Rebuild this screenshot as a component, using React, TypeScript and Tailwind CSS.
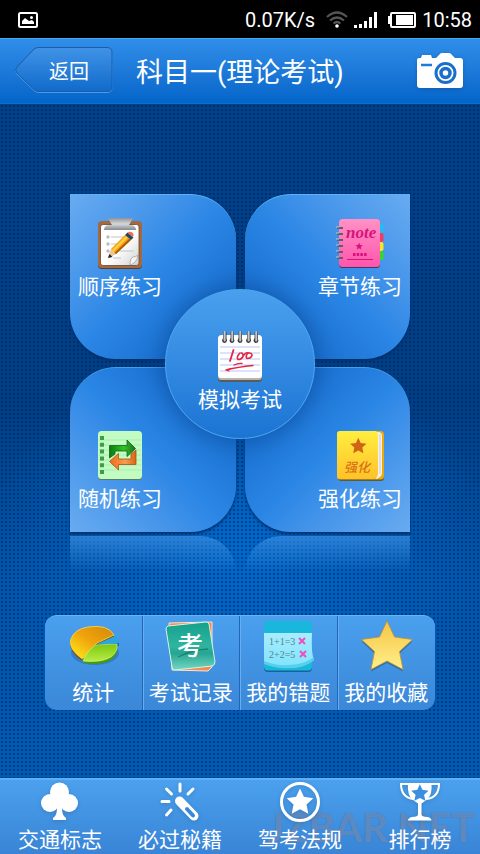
import type { ReactNode } from "react";

const STAR = "M26 1 L33.5 17 L51.5 19.5 L38.5 31.5 L42 49.5 L26 41 L10 49.5 L13.5 31.5 L0.5 19.5 L18.5 17 Z";

function ClipboardIcon() {
  return (
    <svg width="46" height="52" viewBox="0 0 46 52" className="overflow-visible" aria-hidden="true">
      <defs>
        <linearGradient id="clip" x1="0" y1="0" x2="0" y2="1">
          <stop offset="0" stopColor="#8f9396" />
          <stop offset=".5" stopColor="#d6d9db" />
          <stop offset="1" stopColor="#85898c" />
        </linearGradient>
        <linearGradient id="paper" x1="0" y1="0" x2="1" y2="1">
          <stop offset=".55" stopColor="#fff" />
          <stop offset="1" stopColor="#cfcfcf" />
        </linearGradient>
      </defs>
      <rect x="1" y="4" width="44" height="47" rx="4" fill="#5c3d28" />
      <rect x="1" y="3" width="44" height="47" rx="4" fill="#a5693f" />
      <rect x="3.500" y="6.500" width="38.500" height="41" rx="2.500" fill="url(#paper)" stroke="#6b452b" strokeWidth=".8" />
      <path d="M11 0h25l-4 7h3q4 1 4 5H7q0-4 4-5h4z" fill="url(#clip)" />
      <path d="M14 19h15M14 26h9M15 33h22M16 40h8" stroke="#c3c3c3" strokeWidth="1" />
      <circle cx="11" cy="19" r="1.700" fill="#bbb" />
      <circle cx="11" cy="26" r="1.700" fill="#bbb" />
      <circle cx="11" cy="33" r="1.700" fill="#bbb" />
      <path d="M11 39l3-8 5 5-7 4z" fill="#edc798" />
      <path d="M11 40l1.500-4 3 3z" fill="#222" />
      <path d="M14 31L28 17l6 5-15 14z" fill="#f5a013" />
      <path d="M15 32L29 18l2 1.500L16.500 34z" fill="#ffd03e" />
      <path d="M19 36l15-14-1.500-1.500L17.500 35z" fill="#a85b0d" />
      <path d="M28 17l2.500-2.500 6 5L34 22z" fill="#25475b" />
      <path d="M30.500 14.500q4-2 6 1.500.500 2-1 3z" fill="#f06f54" />
      <path d="M41 37q-1 8-8 10 0-7 3-8 3 0 5-2z" fill="#f4f4f4" stroke="#999" strokeWidth=".7" />
    </svg>
  );
}

function NoteIcon() {
  return (
    <svg width="46" height="52" viewBox="0 0 46 52" className="overflow-visible" aria-hidden="true">
      <defs>
        <linearGradient id="pink" x1="0" y1="0" x2="0" y2="1">
          <stop offset="0" stopColor="#ff92c6" />
          <stop offset="1" stopColor="#ff55ac" />
        </linearGradient>
      </defs>
      <rect x="39" y="6" width="7.500" height="9" rx="2" fill="#25bdf0" />
      <rect x="39" y="15" width="7.500" height="9" rx="2" fill="#f23a68" />
      <rect x="39" y="24" width="7.500" height="9" rx="2" fill="#fbe32a" />
      <rect x="39" y="33" width="7.500" height="9" rx="2" fill="#35d924" />
      <rect x="2" y="2" width="41" height="48" rx="3.500" fill="#3c3a6d" />
      <rect x="2" y="1" width="41" height="48" rx="3.500" fill="url(#pink)" />
      <path d="M0 10h6M0 16h6M0 22h6M0 28h6M0 34h6M0 40h6" stroke="#56626c" strokeWidth="2" />
      <path d="M-1 9h3M-1 15h3M-1 21h3M-1 27h3M-1 33h3M-1 39h3" stroke="#b9c4cc" strokeWidth="1" />
      <text x="9" y="20" fontFamily="Liberation Serif, serif" fontStyle="italic" fontWeight="700" fontSize="17" fill="#d8127a">note</text>
      <path d={STAR} transform="translate(18.500 24.500) scale(.14)" fill="#d8127a" />
      <path d="M16 36.500h14" stroke="#d8127a" strokeWidth="3" strokeDasharray="2.500 1.200" />
      <path d="M10 41.500h26" stroke="#d8127a" strokeWidth="1" />
    </svg>
  );
}

function ExamIcon() {
  return (
    <svg width="46" height="52" viewBox="0 0 46 52" aria-hidden="true">
      <defs>
        <linearGradient id="ring" x1="0" y1="0" x2="1" y2="0">
          <stop offset="0" stopColor="#555" />
          <stop offset=".5" stopColor="#ddd" />
          <stop offset="1" stopColor="#333" />
        </linearGradient>
      </defs>
      <rect x="1" y="8" width="44" height="43" rx="3.500" fill="#5e5a58" />
      <rect x="1" y="6" width="44" height="43" rx="3.500" fill="#b9b4b0" />
      <rect x="1" y="4" width="44" height="43" rx="3.500" fill="#fff" />
      <path d="M3 16h40M3 22h40M3 28h40M3 34h40M3 40h40" stroke="#cfd9fa" strokeWidth="1.500" />
      {[6, 13.5, 21.5, 30, 37.5].map((x) => (
        <g key={x}>
          <circle cx={x + 1.5} cy="9.500" r="2.400" fill="#383838" />
          <rect x={x} y="0" width="3.500" height="10.500" rx="1.700" fill="url(#ring)" />
        </g>
      ))}
      <g fill="none" stroke="#e8213f" strokeLinecap="round">
        <path d="M16.500 19L13 30" strokeWidth="1.800" />
        <path d="M23 22q-4 4-2 6.500 3 .5 5-3 .500-3-1.500-3.500M27 24q2-3 4-2" strokeWidth="1.600" />
        <path d="M31 22q-3 3-1 5.500 4 0 5-3 0-3-4-2.500" strokeWidth="1.600" />
        <path d="M17 34q4-2 8-1.500M9 39q12-3 27-4.500M9 39l4-1.500M9 39l3 1" strokeWidth="1.300" />
      </g>
    </svg>
  );
}

function RandomIcon() {
  return (
    <svg width="46" height="52" viewBox="0 0 46 52" aria-hidden="true">
      <defs>
        <linearGradient id="grn" x1="0" y1="0" x2="1" y2="0">
          <stop offset="0" stopColor="#0b7a12" />
          <stop offset=".55" stopColor="#2fc522" />
          <stop offset="1" stopColor="#1c6b20" />
        </linearGradient>
        <linearGradient id="org" x1="0" y1="0" x2="1" y2="0">
          <stop offset="0" stopColor="#ee6a1c" />
          <stop offset=".6" stopColor="#fb9c4d" />
          <stop offset="1" stopColor="#d9650e" />
        </linearGradient>
      </defs>
      <rect x="1" y="2" width="44" height="48" rx="3.500" fill="#55805f" />
      <rect x="1" y="1" width="44" height="48" rx="3.500" fill="#c3fcc2" />
      <path d="M2 10h42M2 15h42M2 20h42M2 25h42M2 30h42M2 35h42M2 40h42" stroke="#a5eeb2" strokeWidth="1" />
      <path d="M5 6v38" stroke="#3f9c49" strokeWidth="4" strokeDasharray="4 2.800" />
      <path d="M39 20v14.500H21.500V40l-9-8.500 9-8v5.500H34v-5z" fill="url(#org)" stroke="#a5521a" strokeWidth=".8" />
      <path d="M12.500 28V15.500h17.500V10l8.500 8.500-8.500 8V21H18v3z" fill="url(#grn)" stroke="#17601b" strokeWidth=".8" />
    </svg>
  );
}

function BookIcon() {
  return (
    <svg width="46" height="52" viewBox="0 0 46 52" className="overflow-visible" aria-hidden="true">
      <defs>
        <linearGradient id="gold" x1="0" y1="0" x2="0" y2="1">
          <stop offset="0" stopColor="#ffee3f" />
          <stop offset="1" stopColor="#ffc229" />
        </linearGradient>
      </defs>
      <rect x="1" y="3" width="46" height="48" rx="3.500" fill="#5e5b37" />
      <rect x="0" y="1" width="47" height="48.500" rx="3.500" fill="#f0a900" />
      <path d="M37 2h4q4 0 4 4v37q0 4-6 6z" fill="#f1f1f1" />
      <path d="M43 4v40" stroke="#c9cbd0" strokeWidth="1" />
      <path d="M3 1h36q2 1 2 4v38q0 5-4 6H3q-3 0-3-3V4q0-3 3-3z" fill="url(#gold)" />
      <path d={STAR} transform="translate(13 7.500) scale(.32)" fill="#d06416" />
      <text x="7" y="42" fontFamily="Noto Sans CJK SC, sans-serif" fontStyle="italic" fontWeight="500" fontSize="13" fill="#d97218">强化</text>
    </svg>
  );
}

function PieIcon() {
  return (
    <svg width="56" height="56" viewBox="0 0 56 56" aria-hidden="true">
      <defs>
        <linearGradient id="pieGold" x1="1" y1="0" x2="0" y2="1">
          <stop offset="0" stopColor="#d08a08" />
          <stop offset=".5" stopColor="#f0a30c" />
          <stop offset="1" stopColor="#fff01a" />
        </linearGradient>
        <linearGradient id="pieGreen" x1="0" y1="0" x2="0" y2="1">
          <stop offset="0" stopColor="#7cc80f" />
          <stop offset="1" stopColor="#b9ec45" />
        </linearGradient>
      </defs>
      <ellipse cx="30" cy="33" rx="24" ry="12" fill="#17508f" opacity=".35" />
      <path d="M5 20q-1 12 11 20l3-1 12-13 18-7v-4z" fill="#7a5206" />
      <path d="M5.500 20Q9 9 23 7q20-3 26 8l-17 8q-6 4-10 12-3 5-6 3Q4 29 5.500 20z" fill="url(#pieGold)" stroke="#ffd65a" strokeWidth=".8" />
      <path d="M32 25l18-8q4 3 4 7v2H36z" fill="#1172a8" />
      <path d="M32 24l18-8q4 3 4 7l-10 1z" fill="#2ba6de" />
      <path d="M30 27l22-2q2 9-6 15-10 6-28 3v-4z" fill="#459a0d" />
      <path d="M30 25l22-1q1 8-6 13-10 6-28 4 4-10 12-16z" fill="url(#pieGreen)" stroke="#d4f58d" strokeWidth=".6" />
    </svg>
  );
}

function RecordIcon() {
  return (
    <svg width="56" height="56" viewBox="0 0 56 56" aria-hidden="true">
      <defs>
        <linearGradient id="teal" x1="0" y1="0" x2="0" y2="1">
          <stop offset="0" stopColor="#15a18d" />
          <stop offset=".5" stopColor="#2eb5a0" />
          <stop offset=".65" stopColor="#26a592" />
          <stop offset="1" stopColor="#74d8c4" />
        </linearGradient>
      </defs>
      <path d="M6 3l43-1v45l-4 4-36-1z" fill="#f28b4c" stroke="#fbe5d2" strokeWidth="1" />
      <path d="M5 6l38-4q2 0 3 2l6 38q0 3-3 4l-37 4q-3 0-3-3L3 9q0-2 2-3z" fill="url(#teal)" stroke="#d8f2e8" strokeWidth="1" />
      <path d="M15 37q14-7 30-8" stroke="#14705f" strokeWidth="1.300" fill="none" opacity=".7" />
      <text x="14" y="35" fontFamily="Noto Sans CJK SC, sans-serif" fontWeight="500" fontSize="26" fill="#fff">考</text>
    </svg>
  );
}

function MistakesIcon() {
  return (
    <svg width="56" height="56" viewBox="0 0 56 56" aria-hidden="true">
      <defs>
        <linearGradient id="cyan" x1="0" y1="0" x2="0" y2="1">
          <stop offset="0" stopColor="#a8edff" />
          <stop offset="1" stopColor="#7fe3fb" />
        </linearGradient>
      </defs>
      <rect x="4" y="3" width="48" height="49" rx="4" fill="#17629a" />
      <rect x="4" y="1" width="48" height="49.500" rx="4" fill="#1ab7dc" />
      <path d="M4 13h48q-1 20 2 27-8 7-23 8-18 0-27-5z" fill="url(#cyan)" />
      <path d="M4 44q12 5 27 4 15-1 23-8v-3q-8 7-25 8-14 1-25-4z" fill="#55cfeb" />
      <g fontFamily="Liberation Serif, serif" fontSize="10" fill="#4d8494">
        <text x="9" y="25">1+1=3</text>
        <text x="9" y="38">2+2=5</text>
      </g>
      <path d="M39 18l6 6M45 18l-6 6M40 31l6 6M46 31l-6 6" stroke="#ee4fc0" strokeWidth="2" />
    </svg>
  );
}

function FavoriteIcon() {
  return (
    <svg width="56" height="56" viewBox="0 0 56 56" aria-hidden="true">
      <defs>
        <linearGradient id="starFill" x1="0" y1="0" x2="0" y2="1">
          <stop offset="0" stopColor="#f6c445" />
          <stop offset="1" stopColor="#fff08a" />
        </linearGradient>
      </defs>
      <path d={STAR} transform="translate(3 2)" fill="#2c5f8c" opacity=".7" />
      <path d={STAR} transform="translate(3 0)" fill="url(#starFill)" stroke="#c08f35" strokeWidth=".8" strokeLinejoin="round" />
    </svg>
  );
}

function ClubIcon() {
  return (
    <svg width="48" height="40" viewBox="0 0 48 40" fill="#fff" className="drop-shadow-sm" aria-hidden="true">
      <circle cx="23.500" cy="11" r="9.500" />
      <circle cx="14" cy="22" r="9" />
      <circle cx="33" cy="22" r="9" />
      <path d="M19 16h9l-2 8q-.500 11 4 13v2H17v-2q4.500-2 4-13z" />
    </svg>
  );
}

function WandIcon() {
  return (
    <svg width="48" height="40" viewBox="0 0 48 40" fill="none" stroke="#fff" strokeLinecap="round" className="drop-shadow-sm" aria-hidden="true">
      <path d="M24 3v7M10.500 8l5 5M37 8l-5 5M6 20.500h7M15 29l-4.500 5" strokeWidth="3" />
      <path d="M23.500 20L38 35" strokeWidth="9" />
      <path d="M31 28l6 6.500" stroke="#3b88db" strokeWidth="4" />
    </svg>
  );
}

function RulesIcon() {
  return (
    <svg width="48" height="42" viewBox="0 0 48 42" className="-mb-[2px] drop-shadow-sm" aria-hidden="true">
      <circle cx="24" cy="21" r="18.500" fill="none" stroke="#fff" strokeWidth="3" />
      <path d={STAR} transform="translate(10.500 7) scale(.52)" fill="#fff" />
    </svg>
  );
}

function TrophyIcon() {
  return (
    <svg width="48" height="40" viewBox="0 0 48 40" className="drop-shadow-sm" aria-hidden="true">
      <path d="M14 3H5q0 13 12 15M33 3h10q0 13-12 15" fill="none" stroke="#fff" strokeWidth="2" />
      <path d="M12 2h23.500q1 13-5 17-4 2.500-5 3.500v11q0 2 6 2.500 4 1 4 3.500H12q0-2.500 4-3.500 6-.5 6-2.500v-11q-1-1-5-3.500-6-4-5-17z" fill="#fff" />
      <path d={STAR} transform="translate(15 3) scale(.34)" fill="#3b8fe2" />
    </svg>
  );
}

function CameraIcon() {
  return (
    <svg width="48" height="36" viewBox="0 0 48 36" className="drop-shadow-sm" aria-hidden="true">
      <path d="M3 5h2l1-3h9l1 3h4l3-3q1-2 3-2h7q2 0 3 2l3 3h5q3 0 3 3v24q0 3-3 3H4q-3 0-3-3V7q0-2 2-2z" fill="#fff" />
      <path d="M5 12h11" stroke="#1f7bd8" strokeWidth="2.500" />
      <circle cx="29.500" cy="20" r="9.500" fill="none" stroke="#1a6fcb" strokeWidth="3" />
      <circle cx="29.500" cy="20" r="4.500" fill="none" stroke="#1a6fcb" strokeWidth="3.500" />
    </svg>
  );
}

function StatusBar() {
  return (
    <div className="flex h-[38px] items-center bg-black pt-px pr-2 pl-[18px] text-xl text-white">
      <svg width="20" height="16" viewBox="0 0 20 16" className="mr-auto" aria-hidden="true">
        <rect x="1" y="1" width="18" height="14" rx="1.500" fill="none" stroke="#fff" strokeWidth="2" />
        <path d="M4 12V9l3-3 4 3 3-1 2 2v2z" fill="#fff" />
        <circle cx="13.500" cy="5.500" r="1.500" fill="#fff" />
      </svg>
      <span>0.07K/s</span>
      <svg width="22" height="17" viewBox="0 0 22 17" className="ml-[11px]" fill="none" stroke="#555" strokeWidth="2.200" aria-hidden="true">
        <path d="M1 6Q11-3 21 6M4 9.500q7-6 14 0M7.500 12.500q3.500-3 7 0" />
        <circle cx="11" cy="15" r="1.800" fill="#fff" stroke="none" />
      </svg>
      <svg width="24" height="16" viewBox="0 0 24 16" className="ml-[6px]" fill="#fff" aria-hidden="true">
        <path d="M0 13h3v3H0zM5 12h3v4H5zM10 9h3v7h-3zM15 5h3v11h-3zM20 0h3v16h-3z" />
      </svg>
      <svg width="28" height="16" viewBox="0 0 28 16" className="ml-[10px]" aria-hidden="true">
        <rect x="3" y="1" width="24" height="14" rx="1" fill="none" stroke="#fff" strokeWidth="2" />
        <path d="M0 4h3v8H0zM8 3h17v10H8z" fill="#fff" />
      </svg>
      <span className="ml-[6px]">10:58</span>
    </div>
  );
}

function Header() {
  return (
    <header className="flex h-[66px] items-center border-t border-b border-t-[#3fabf2] border-b-[#0b6fd2] bg-linear-to-b from-[#308ee9] to-[#0365c9] pr-4 pl-[15px]">
      <button className="relative h-[48px] w-[98px] pt-[2px] pl-[10px] text-xl text-white">
        <svg className="absolute inset-0" width="98" height="48" viewBox="0 0 98 48" aria-hidden="true">
          <defs>
            <linearGradient id="back" x1="0" y1="0" x2="0" y2="1">
              <stop offset="0" stopColor="#4093e6" />
              <stop offset="1" stopColor="#116bcb" />
            </linearGradient>
          </defs>
          <path d="M24 1.500h68q5 0 5 5v34q0 5-5 5H24q-3 0-5-2L2 27q-3-3 0-6L19 3q2-1.500 5-1.500z" fill="none" stroke="#4c9bea" />
          <path d="M24 .5h68q5 0 5 5v34q0 5-5 5H24q-3 0-5-2L2 26q-3-3 0-6L19 2q2-1.500 5-1.500z" fill="url(#back)" stroke="#1a5da8" />
        </svg>
        <span className="relative">返回</span>
      </button>
      <h1 className="ml-[23px] pt-1 text-[27px] leading-9 whitespace-nowrap text-white">科目一(理论考试)</h1>
      <button className="ml-auto" aria-label="拍照">
        <CameraIcon />
      </button>
    </header>
  );
}

function Petal({ icon, label, className }: { icon: ReactNode; label: string; className: string }) {
  return (
    <button className={`flex h-[165px] px-2 shadow-[0_2px_3px_#00306a] ${className}`}>
      <span className="flex flex-col items-center gap-1">
        {icon}
        <span className="leading-[26px]">{label}</span>
      </span>
    </button>
  );
}

function PracticeMenu() {
  return (
    <section className="relative w-[340px] text-[21px] text-white">
      <div className="grid grid-cols-2 gap-x-[9px] gap-y-2">
        <Petal
          icon={<ClipboardIcon />}
          label="顺序练习"
          className="justify-start rounded-tr-[46px] rounded-br-[46px] rounded-bl-[46px] border-t border-[#5ab4f8] bg-linear-to-br from-[#68abf1] via-[#2a86e5] via-50% to-[#0f62c2] pt-[23px]"
        />
        <Petal
          icon={<NoteIcon />}
          label="章节练习"
          className="justify-end rounded-tl-[46px] rounded-br-[46px] rounded-bl-[46px] border-t border-[#5ab4f8] bg-linear-to-bl from-[#68abf1] via-[#2a86e5] via-50% to-[#0f62c2] pt-[23px]"
        />
        <Petal
          icon={<RandomIcon />}
          label="随机练习"
          className="justify-start rounded-tl-[46px] rounded-tr-[46px] rounded-br-[46px] border-t border-[#3f9fee] bg-linear-to-tr from-[#68abf1] via-[#2a86e5] via-50% to-[#0f62c2] pt-[62px]"
        />
        <Petal
          icon={<BookIcon />}
          label="强化练习"
          className="justify-end rounded-tl-[46px] rounded-tr-[46px] rounded-bl-[46px] border-t border-[#3f9fee] bg-linear-to-tl from-[#68abf1] via-[#2a86e5] via-50% to-[#0f62c2] pt-[62px]"
        />
      </div>
      {/* faded reflection under the lower petals */}
      <div className="mt-1 grid grid-cols-2 gap-x-[9px]">
        <div className="h-9 rounded-tr-[46px] bg-linear-to-b from-[#3c91e6]/70 to-transparent" />
        <div className="h-9 rounded-tl-[46px] bg-linear-to-b from-[#3c91e6]/70 to-transparent" />
      </div>
      <button className="absolute top-[95px] left-[95px] flex size-[150px] flex-col items-center gap-1 rounded-full border border-[#4aa6f2] bg-linear-to-b from-[#4aa0ee] to-[#1b74d3] pt-[41px] shadow-[0_0_22px_3px_rgba(6,62,138,0.5)]">
        <ExamIcon />
        <span className="leading-[26px]">模拟考试</span>
      </button>
    </section>
  );
}

const tools = [
  { label: "统计", icon: <PieIcon /> },
  { label: "考试记录", icon: <RecordIcon /> },
  { label: "我的错题", icon: <MistakesIcon /> },
  { label: "我的收藏", icon: <FavoriteIcon /> },
];

function ToolPanel() {
  return (
    <section className="grid w-full grid-cols-4 divide-x divide-[#2166bb] overflow-hidden rounded-xl border-t border-[#68b4f3] bg-linear-to-b from-[#4aa0ee] to-[#3b87d8] text-[21px] text-white">
      {tools.map((tool) => (
        <button
          key={tool.label}
          className="flex flex-col items-center gap-1 pt-1 pb-1 whitespace-nowrap not-first:shadow-[inset_1px_0_0_#68aeee]"
        >
          {tool.icon}
          <span className="leading-[26px]">{tool.label}</span>
        </button>
      ))}
    </section>
  );
}

const tabs = [
  { label: "交通标志", icon: <ClubIcon /> },
  { label: "必过秘籍", icon: <WandIcon /> },
  { label: "驾考法规", icon: <RulesIcon /> },
  { label: "排行榜", icon: <TrophyIcon /> },
];

function TabBar() {
  return (
    <nav className="relative grid grid-cols-4 border-t-2 border-[#5eb0f4] bg-linear-to-b from-[#4ba1ee] to-[#3984d6] pt-px text-[21px] text-white">
      {/* site watermark sits behind the labels */}
      <span className="pointer-events-none absolute right-[5px] bottom-1 font-['Lato',sans-serif] text-[40px] leading-[46px] font-bold text-[#7f9cc4]/60 text-shadow-[0_0_1px_#2f6fb8]">
        JZBAR.NET
      </span>
      {tabs.map((tab) => (
        <a key={tab.label} href="#" className="relative flex flex-col items-center gap-[6px]">
          {tab.icon}
          <span className="leading-[27px]">{tab.label}</span>
        </a>
      ))}
    </nav>
  );
}

export default function App() {
  return (
    <div className="flex min-h-screen flex-col bg-[#004a9c] font-['Roboto','Noto_Sans_CJK_SC',sans-serif]">
      <StatusBar />
      <Header />
      <main className="flex flex-1 flex-col items-center gap-[43px] bg-[radial-gradient(circle,rgba(0,25,70,0.45)_0.8px,transparent_1px),radial-gradient(ellipse_260px_190px_at_50%_66%,#0068cc,transparent),linear-gradient(#00418a,#003f86_45%,#0054aa_70%,#005ab4)] bg-size-[4px_4px,100%_100%,100%_100%] px-[45px] pt-[90px] pb-10">
        <PracticeMenu />
        <ToolPanel />
      </main>
      <TabBar />
    </div>
  );
}
